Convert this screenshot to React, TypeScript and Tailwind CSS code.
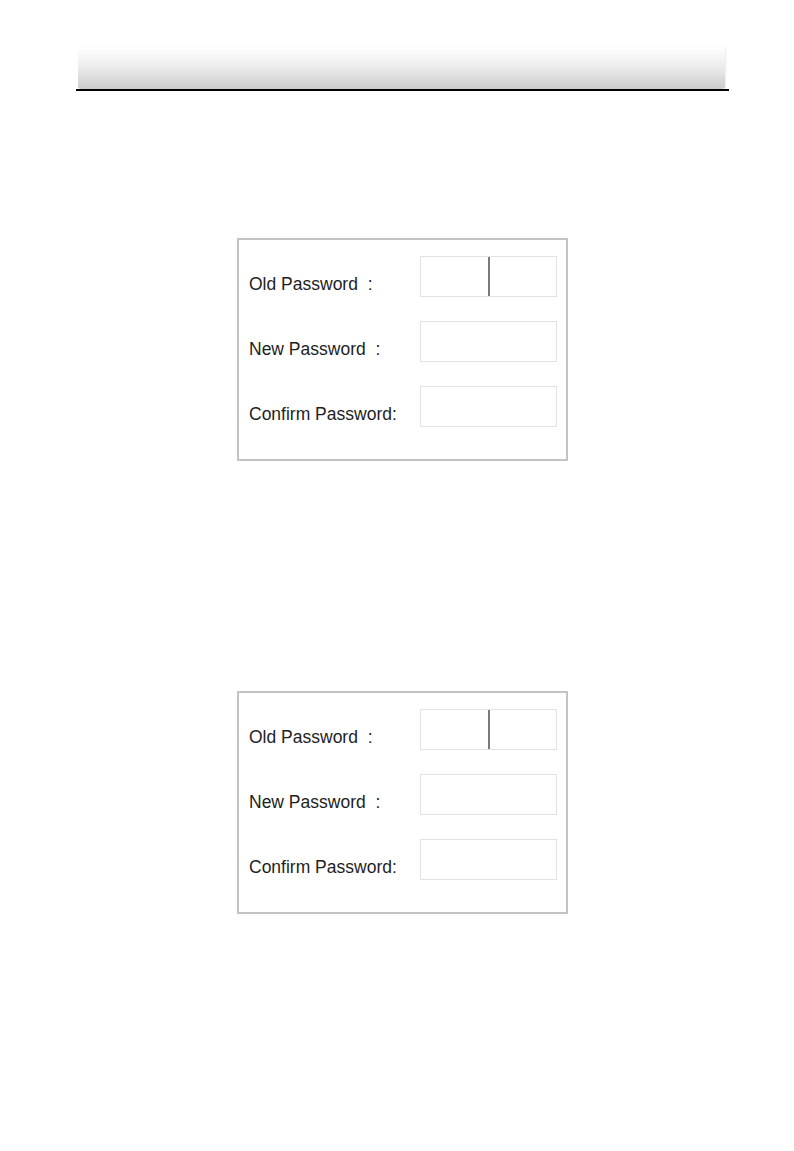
const rows = [
  { label: "Old Password  :", split: true },
  { label: "New Password  :", split: false },
  { label: "Confirm Password:", split: false },
];

const PasswordBox = () => (
  <div className="ml-[161px] w-[331px] border-2 border-[#c3c3c3] bg-white pl-[10px] pt-[16px] pb-[32px]">
    <div className="flex flex-col gap-[24px]">
      {rows.map((row) => (
        <div key={row.label} className="flex items-start">
          <div className="w-[171px] whitespace-pre pt-[18px] text-[17.5px] leading-5 text-[#1e1e1e]">
            {row.label}
          </div>
          <div className="flex h-[41px] w-[137px] border border-[#e2e2e2]">
            {row.split && (
              <>
                <div className="flex-1" />
                <div className="w-[2px] bg-[#7a7a7a]" />
                <div className="flex-1" />
              </>
            )}
          </div>
        </div>
      ))}
    </div>
  </div>
);

export default function App() {
  return (
    <div
      className="min-h-[1151px] w-[794px] bg-white pl-[76px] pr-[65px] pt-[47px]"
      style={{ fontFamily: '"Liberation Sans", Arial, sans-serif' }}
    >
      <div className="ml-[2px] mr-[4px] h-[42px] rounded-[3px] bg-linear-to-b from-[#ffffff] via-[#ebebeb] to-[#cbcbcb] shadow-[1px_0_2px_rgba(0,0,0,0.08)]" />
      <div className="h-[2px] bg-black" />
      <div className="pt-[147px]">
        <PasswordBox />
      </div>
      <div className="pt-[230px]">
        <PasswordBox />
      </div>
    </div>
  );
}
